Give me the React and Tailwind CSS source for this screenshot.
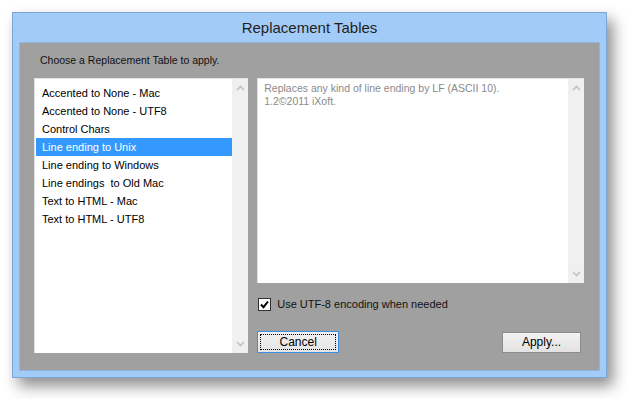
import React from 'react'

const tables = [
  'Accented to None - Mac',
  'Accented to None - UTF8',
  'Control Chars',
  'Line ending to Unix',
  'Line ending to Windows',
  'Line endings  to Old Mac',
  'Text to HTML - Mac',
  'Text to HTML - UTF8',
]

function Chevron({ up }) {
  return (
    <svg width="9" height="6" viewBox="0 0 9 6" className="block">
      <path d={up ? 'M1 5 L4.5 1.5 L8 5' : 'M1 1 L4.5 4.5 L8 1'} fill="none" stroke="#c2c2c2" strokeWidth="1.6" />
    </svg>
  )
}

function ScrollBar() {
  return (
    <div className="w-[16px] h-full bg-[#f0f0f0] flex flex-col justify-between items-center py-[6px]">
      <Chevron up />
      <Chevron />
    </div>
  )
}

export default function App() {
  const selected = 3
  return (
    <div className="w-[628px] h-[399px] bg-white pl-[12px] pt-[12px]" style={{ fontFamily: '"Liberation Sans", Arial, sans-serif' }}>
      {/* Window frame */}
      <div className="w-[595px] h-[366px] bg-[#a3cbf7] border border-[#7aa5d6] shadow-[6px_8px_14px_rgba(0,0,0,0.45)] flex flex-col px-[6px] pb-[6px]">
        <div className="h-[29px] flex items-center justify-center text-[15px] text-[#1e1e1e] pt-[1px]">
          Replacement Tables
        </div>

        <div className="flex-1 bg-[#a0a0a0] border border-[#8fb4df] pl-[14px] pr-[15px] flex flex-col">
          <div className="h-[35px] flex items-center pl-[6px] text-[10.5px] text-[#111]">
            Choose a Replacement Table to apply.
          </div>

          <div className="flex gap-[9px]">
            {/* List */}
            <div className="w-[215px] h-[275px] bg-white border-t border-l border-[#e3e3e3] flex">
              <div className="flex-1 pt-[5px] pl-[1px]">
                {tables.map((t, i) => (
                  <div
                    key={t}
                    className={`h-[18px] flex items-center pl-[6px] text-[11px] whitespace-pre ${i === selected ? 'bg-[#3399ff] text-white' : 'text-black'}`}
                  >
                    {t}
                  </div>
                ))}
              </div>
              <ScrollBar />
            </div>

            {/* Right column */}
            <div className="w-[328px] flex flex-col">
              <div className="h-[205px] bg-white border-t border-l border-[#e3e3e3] flex">
                <div className="flex-1 pt-[3px] pl-[6px] text-[10.5px] leading-[13px] text-[#8a8a8a]">
                  <div>Replaces any kind of line ending by LF (ASCII 10).</div>
                  <div>1.2©2011 iXoft.</div>
                </div>
                <ScrollBar />
              </div>

              <div className="mt-[13px] ml-[1px] flex items-center gap-[6px]">
                <div className="w-[13px] h-[13px] bg-white border border-[#333] flex items-center justify-center">
                  <svg width="9" height="9" viewBox="0 0 9 9">
                    <path d="M1 4.5 L3.5 7.2 L8 1.5" fill="none" stroke="#000" strokeWidth="2" />
                  </svg>
                </div>
                <span className="text-[11px] text-[#111]">Use UTF-8 encoding when needed</span>
              </div>

              <div className="mt-[18px] flex items-start justify-between pr-[3px]">
                <button className="w-[82px] h-[22px] border border-[#3c8fe0] bg-gradient-to-b from-[#f2f2f2] to-[#e4e4e4] p-[2px]">
                  <div className="w-full h-full border border-dotted border-black flex items-center justify-center text-[12px] text-black">
                    Cancel
                  </div>
                </button>
                <button className="w-[79px] h-[21px] mt-[1px] border border-[#8c8c8c] bg-gradient-to-b from-[#f2f2f2] to-[#e3e3e3] flex items-center justify-center text-[12px] text-black">
                  Apply...
                </button>
              </div>
            </div>
          </div>
        </div>
      </div>
    </div>
  )
}
